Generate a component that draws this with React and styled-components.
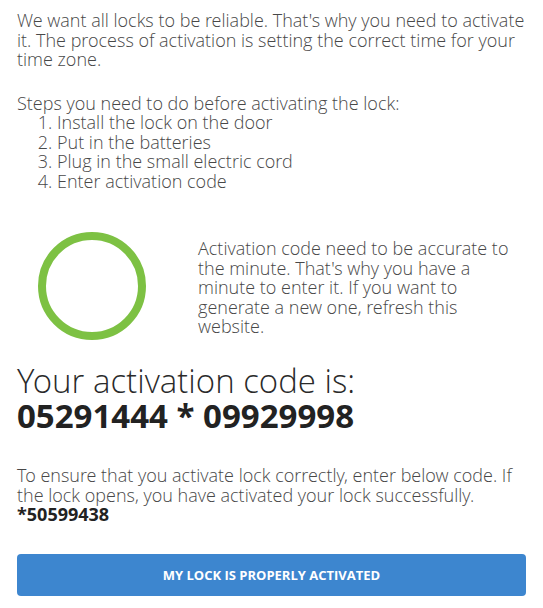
import React from 'react';
import styled, { createGlobalStyle } from 'styled-components';

const GlobalStyle = createGlobalStyle`
  body {
    margin: 0;
    background: #fff;
    font-family: 'Open Sans', 'Liberation Sans', sans-serif;
    color: #333;
  }
`;

const light = `'Open Sans Light', 'Open Sans', 'Liberation Sans', sans-serif`;

const Page = styled.div`
  padding: 11px 17px 0 17px;
  width: 509px;
`;

const Text = styled.p`
  margin: ${(p) => (p.$gap ? `${p.$gap}px 0 0 0` : '0')};
  font-family: ${light};
  font-size: 18px;
  font-weight: 300;
  line-height: 19.5px;
  color: #484848;
`;

const Steps = styled.ol`
  margin: 0;
  padding-left: 40px;
  font-family: ${light};
  font-size: 18px;
  font-weight: 300;
  line-height: 19.5px;
  color: #484848;
`;

const TimerRow = styled.div`
  display: flex;
  align-items: center;
  margin-top: 41px;
`;

const TimerBox = styled.div`
  flex: 0 0 181px;
  display: flex;
  padding-left: 21px;
  box-sizing: border-box;
`;

const Ring = styled.div`
  width: 108px;
  height: 108px;
  border-radius: 50%;
  border: 8px solid ${(p) => p.color};
  box-sizing: border-box;
`;

const Side = styled(Text)`
  width: 318px;
  margin-top: 4px;
`;

const Heading = styled.h2`
  margin: 24px 0 0 0;
  font-family: ${light};
  font-size: 33px;
  font-weight: 300;
  line-height: 34px;
  color: #2a2a2a;
`;

const Code = styled.div`
  font-size: 33px;
  font-weight: 700;
  line-height: 36px;
  color: #222;
`;

const Check = styled.div`
  margin-top: 32px;
`;

const Strong = styled.strong`
  font-family: 'Open Sans', 'Liberation Sans', sans-serif;
  font-weight: 700;
  color: #222;
`;

const Button = styled.button`
  display: block;
  width: 100%;
  height: 42px;
  margin-top: 29px;
  border: none;
  border-radius: 4px;
  background: #3d86cf;
  color: #fff;
  font-family: 'Open Sans', 'Liberation Sans', sans-serif;
  font-weight: 700;
  font-size: 13px;
  text-transform: uppercase;
  cursor: pointer;
`;

const steps = [
  'Install the lock on the door',
  'Put in the batteries',
  'Plug in the small electric cord',
  'Enter activation code',
];

export default function App() {
  return (
    <Page>
      <GlobalStyle />
      <Text>
        We want all locks to be reliable. That's why you need to activate it. The
        process of activation is setting the correct time for your time zone.
      </Text>
      <Text $gap={24}>Steps you need to do before activating the lock:</Text>
      <Steps>
        {steps.map((s) => (
          <li key={s}>{s}</li>
        ))}
      </Steps>
      <TimerRow>
        <TimerBox>
          <Ring color="#7dc143" />
        </TimerBox>
        <Side>
          Activation code need to be accurate to the minute. That's why you have a
          minute to enter it. If you want to generate a new one, refresh this
          website.
        </Side>
      </TimerRow>
      <Heading>Your activation code is:</Heading>
      <Code>05291444 * 09929998</Code>
      <Check>
        <Text>
          To ensure that you activate lock correctly, enter below code. If the lock
          opens, you have activated your lock successfully.
          <br />
          <Strong>*50599438</Strong>
        </Text>
      </Check>
      <Button>My lock is properly activated</Button>
    </Page>
  );
}
